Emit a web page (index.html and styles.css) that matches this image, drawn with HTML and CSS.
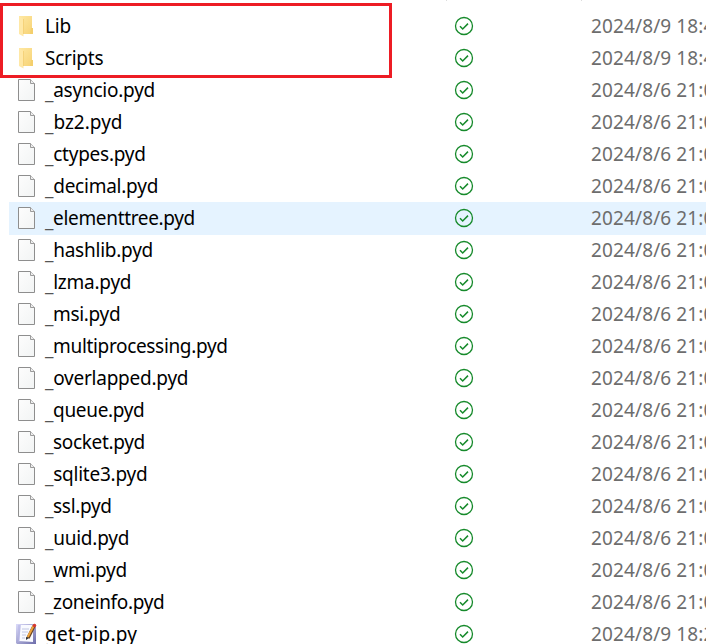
FILE: index.html
```
<!DOCTYPE html>
<html lang="en">
<head>
<meta charset="utf-8">
<title>Files</title>
<link rel="stylesheet" href="styles.css">
</head>
<body>
<svg class="defs" width="0" height="0" aria-hidden="true">
  <defs>
    <linearGradient id="gold" x1="0" y1="0" x2="1" y2="1"><stop offset="0" stop-color="#ffe8a2"/><stop offset="1" stop-color="#f6d274"/></linearGradient>
    <linearGradient id="paper" x1="0" y1="0" x2="1" y2="1"><stop offset="0" stop-color="#fdfdfd"/><stop offset="1" stop-color="#f2f4f4"/></linearGradient>
    <linearGradient id="book" x1="0" y1="0" x2="1" y2="1"><stop offset="0" stop-color="#dcdcfa"/><stop offset="1" stop-color="#6a6aa8"/></linearGradient>
    <symbol id="folder" viewBox="0 0 22 24">
      <path d="M3 2H16V14H17V20H7L3 19Z" fill="url(#gold)"/>
      <path d="M3 2L7.5 5V22.5L3 20Z" fill="#ffe8a6"/>
      <path d="M7.5 5V20" stroke="#f0ca6c" stroke-width=".7"/>
      <path d="M15 14H17V20H14Z" fill="#f4cf6c"/>
    </symbol>
    <symbol id="file" viewBox="0 0 22 24">
      <path d="M2.5 1.5H14.5L18.5 5.5V22.5H2.5Z" fill="url(#paper)" stroke="#8e8e8e"/>
      <path d="M14.5 1.5V5.5H18.5" fill="#eee" stroke="#9b9b9b"/>
    </symbol>
    <symbol id="script" viewBox="0 0 22 24">
      <path d="M0 2H18L20 4V23H2L0 21Z" fill="url(#book)"/>
      <path d="M5 3H17V20L3 19Z" fill="#f9faff"/>
      <path d="M3 3V20" stroke="#b4b4e6"/>
      <path d="M6 7H13M6 10H12M6 13H10M6 16H9" stroke="#c0c6e2"/>
      <path d="M18 4L12 16" stroke="#6b4525" stroke-width="3.4"/>
      <path d="M17.5 4L11.8 15" stroke="#f0a43c" stroke-width="2"/>
      <path d="M17 4L18 2L20 3L19 5Z" fill="#d8362c" stroke="#d8362c"/>
      <path d="M10 15L13 16L10 18Z" fill="#333"/>
    </symbol>
    <symbol id="ok" viewBox="0 0 20 20">
      <circle cx="10" cy="10" r="8.5" fill="none" stroke="#168a2b" stroke-width="1.3"/>
      <path d="M6 10.2L8.7 13L14 7.6" fill="none" stroke="#168a2b" stroke-width="1.5"/>
    </symbol>
  </defs>
</svg>
<div class="header"><i></i><i></i></div>
<main class="list">
<div class="row folder"><svg class="icon"><use href="#folder"/></svg><span class="name">Lib</span><svg class="ok"><use href="#ok"/></svg><time>2024/8/9 18:42</time></div>
<div class="row folder"><svg class="icon"><use href="#folder"/></svg><span class="name">Scripts</span><svg class="ok"><use href="#ok"/></svg><time>2024/8/9 18:42</time></div>
<div class="row"><svg class="icon"><use href="#file"/></svg><span class="name"><u>_</u>asyncio.pyd</span><svg class="ok"><use href="#ok"/></svg><time>2024/8/6 21:05</time></div>
<div class="row"><svg class="icon"><use href="#file"/></svg><span class="name normal"><u>_</u>bz2.pyd</span><svg class="ok"><use href="#ok"/></svg><time>2024/8/6 21:05</time></div>
<div class="row"><svg class="icon"><use href="#file"/></svg><span class="name"><u>_</u>ctypes.pyd</span><svg class="ok"><use href="#ok"/></svg><time>2024/8/6 21:05</time></div>
<div class="row"><svg class="icon"><use href="#file"/></svg><span class="name"><u>_</u>decimal.pyd</span><svg class="ok"><use href="#ok"/></svg><time>2024/8/6 21:05</time></div>
<div class="row active"><svg class="icon"><use href="#file"/></svg><span class="name tight"><u>_</u>elementtree.pyd</span><svg class="ok"><use href="#ok"/></svg><time>2024/8/6 21:05</time></div>
<div class="row"><svg class="icon"><use href="#file"/></svg><span class="name"><u>_</u>hashlib.pyd</span><svg class="ok"><use href="#ok"/></svg><time>2024/8/6 21:05</time></div>
<div class="row"><svg class="icon"><use href="#file"/></svg><span class="name"><u>_</u>lzma.pyd</span><svg class="ok"><use href="#ok"/></svg><time>2024/8/6 21:05</time></div>
<div class="row"><svg class="icon"><use href="#file"/></svg><span class="name tight"><u>_</u>msi.pyd</span><svg class="ok"><use href="#ok"/></svg><time>2024/8/6 21:05</time></div>
<div class="row"><svg class="icon"><use href="#file"/></svg><span class="name tight"><u>_</u>multiprocessing.pyd</span><svg class="ok"><use href="#ok"/></svg><time>2024/8/6 21:05</time></div>
<div class="row"><svg class="icon"><use href="#file"/></svg><span class="name"><u>_</u>overlapped.pyd</span><svg class="ok"><use href="#ok"/></svg><time>2024/8/6 21:05</time></div>
<div class="row"><svg class="icon"><use href="#file"/></svg><span class="name tight"><u>_</u>queue.pyd</span><svg class="ok"><use href="#ok"/></svg><time>2024/8/6 21:05</time></div>
<div class="row"><svg class="icon"><use href="#file"/></svg><span class="name tight"><u>_</u>socket.pyd</span><svg class="ok"><use href="#ok"/></svg><time>2024/8/6 21:05</time></div>
<div class="row"><svg class="icon"><use href="#file"/></svg><span class="name"><u>_</u>sqlite3.pyd</span><svg class="ok"><use href="#ok"/></svg><time>2024/8/6 21:05</time></div>
<div class="row"><svg class="icon"><use href="#file"/></svg><span class="name tight"><u>_</u>ssl.pyd</span><svg class="ok"><use href="#ok"/></svg><time>2024/8/6 21:05</time></div>
<div class="row"><svg class="icon"><use href="#file"/></svg><span class="name"><u>_</u>uuid.pyd</span><svg class="ok"><use href="#ok"/></svg><time>2024/8/6 21:05</time></div>
<div class="row"><svg class="icon"><use href="#file"/></svg><span class="name"><u>_</u>wmi.pyd</span><svg class="ok"><use href="#ok"/></svg><time>2024/8/6 21:05</time></div>
<div class="row"><svg class="icon"><use href="#file"/></svg><span class="name tight"><u>_</u>zoneinfo.pyd</span><svg class="ok"><use href="#ok"/></svg><time>2024/8/6 21:05</time></div>
<div class="row"><svg class="icon"><use href="#script"/></svg><span class="name wide">get-pip.py</span><svg class="ok"><use href="#ok"/></svg><time>2024/8/9 18:23</time></div>
</main>
<div class="highlight"></div>
</body>
</html>
```
FILE: styles.css
```
* { box-sizing: border-box; }
html, body { height: 644px; overflow: hidden; }
body {
  margin: 0;
  position: relative;
  background: #fff;
  color: #000;
  font: 19px/32px "Noto Sans", "Open Sans", sans-serif;
}
.defs { position: absolute; }
.header { display: flex; gap: 134px; height: 10px; padding-left: 446px; }
.header i { width: 1px; height: 1px; background: #ddd; }
.list { padding-left: 9px; }
.row {
  display: grid;
  grid-template-columns: 36px 409px 137px 1fr;
  height: 32px;
  overflow: hidden;
  white-space: nowrap;
}
.row.active { height: 33px; margin-bottom: -1px; background: #e5f3ff; }
.icon { width: 22px; height: 24px; margin: 4px 0 0 7px; }
.name { letter-spacing: -.24px; }
.name.tight { letter-spacing: -.34px; }
.name.normal { letter-spacing: 0; }
.name.wide { letter-spacing: .25px; }
.name u { display: inline-block; transform: translateY(2px); text-decoration: none; color: #555; }
.ok { width: 20px; height: 20px; margin-top: 6px; }
time { color: #6d6d6d; letter-spacing: .12px; }
.highlight {
  position: absolute;
  left: 0;
  top: 3px;
  width: 392px;
  height: 75px;
  border: 3px solid #ed1c24;
}
```
